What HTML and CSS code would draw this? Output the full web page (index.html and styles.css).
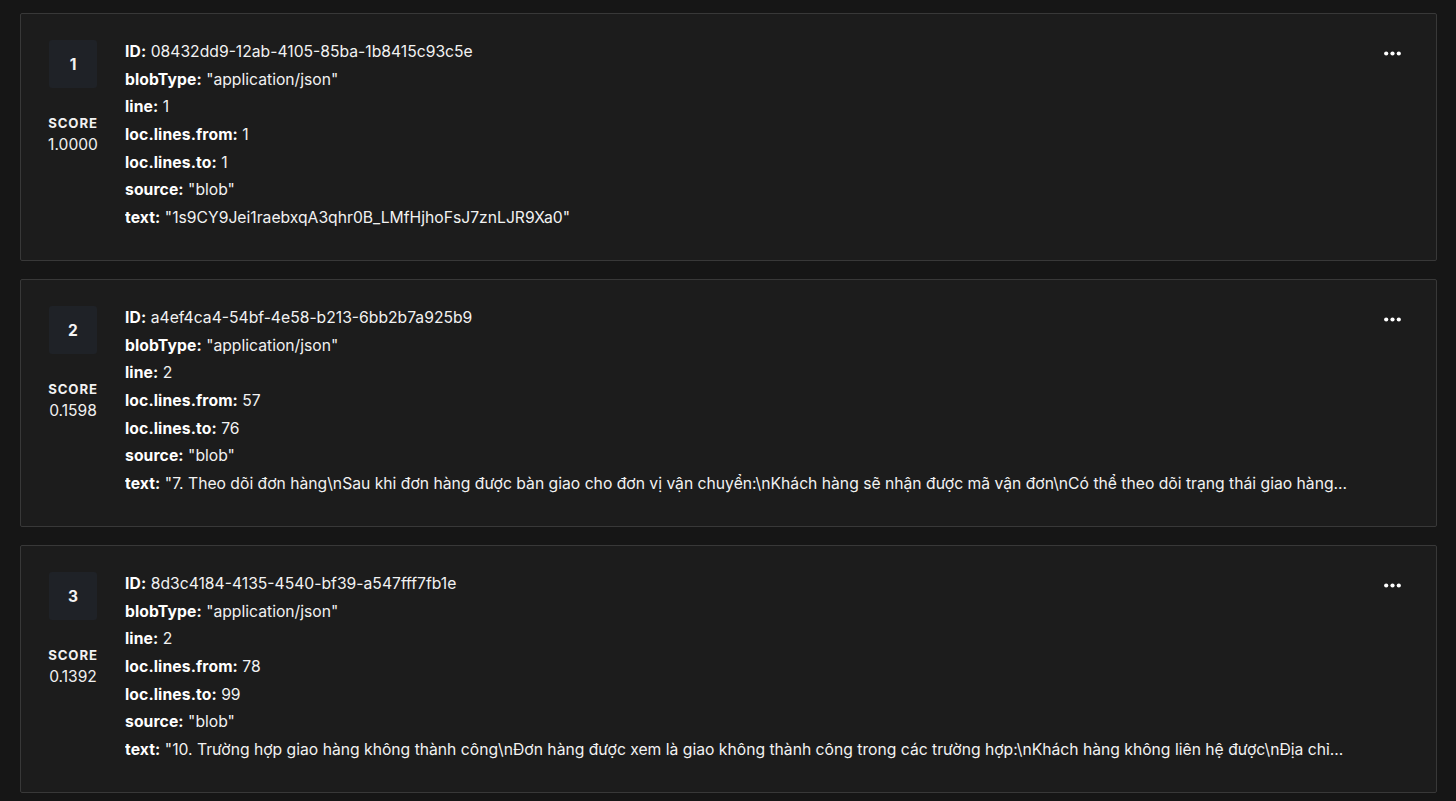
FILE: index.html
```html
<!DOCTYPE html>
<html>
<head>
<meta charset="utf-8">
<link rel="stylesheet" href="styles.css">
</head>
<body>
<div class="list">
  <div class="card">
    <div class="rank">
      <div class="badge">1</div>
      <div class="score-label">SCORE</div>
      <div class="score">1.0000</div>
    </div>
    <div class="fields">
      <div class="row"><b>ID:</b> 08432dd9-12ab-4105-85ba-1b8415c93c5e</div>
      <div class="row"><b>blobType:</b> "application/json"</div>
      <div class="row"><b>line:</b> 1</div>
      <div class="row"><b>loc.lines.from:</b> 1</div>
      <div class="row"><b>loc.lines.to:</b> 1</div>
      <div class="row"><b>source:</b> "blob"</div>
      <div class="row"><b>text:</b> "1s9CY9Jei1raebxqA3qhr0B_LMfHjhoFsJ7znLJR9Xa0"</div>
    </div>
    <button class="more"><svg width="17" height="5" viewBox="0 0 17 5"><circle cx="2.2" cy="2.5" r="2.1" fill="#fff"/><circle cx="8.5" cy="2.5" r="2.1" fill="#fff"/><circle cx="14.8" cy="2.5" r="2.1" fill="#fff"/></svg></button>
  </div>
  <div class="card">
    <div class="rank">
      <div class="badge">2</div>
      <div class="score-label">SCORE</div>
      <div class="score">0.1598</div>
    </div>
    <div class="fields">
      <div class="row"><b>ID:</b> a4ef4ca4-54bf-4e58-b213-6bb2b7a925b9</div>
      <div class="row"><b>blobType:</b> "application/json"</div>
      <div class="row"><b>line:</b> 2</div>
      <div class="row"><b>loc.lines.from:</b> 57</div>
      <div class="row"><b>loc.lines.to:</b> 76</div>
      <div class="row"><b>source:</b> "blob"</div>
      <div class="row"><b>text:</b> "7. Theo dõi đơn hàng\nSau khi đơn hàng được bàn giao cho đơn vị vận chuyển:\nKhách hàng sẽ nhận được mã vận đơn\nCó thể theo dõi trạng thái giao hàng...</div>
    </div>
    <button class="more"><svg width="17" height="5" viewBox="0 0 17 5"><circle cx="2.2" cy="2.5" r="2.1" fill="#fff"/><circle cx="8.5" cy="2.5" r="2.1" fill="#fff"/><circle cx="14.8" cy="2.5" r="2.1" fill="#fff"/></svg></button>
  </div>
  <div class="card">
    <div class="rank">
      <div class="badge">3</div>
      <div class="score-label">SCORE</div>
      <div class="score">0.1392</div>
    </div>
    <div class="fields">
      <div class="row"><b>ID:</b> 8d3c4184-4135-4540-bf39-a547fff7fb1e</div>
      <div class="row"><b>blobType:</b> "application/json"</div>
      <div class="row"><b>line:</b> 2</div>
      <div class="row"><b>loc.lines.from:</b> 78</div>
      <div class="row"><b>loc.lines.to:</b> 99</div>
      <div class="row"><b>source:</b> "blob"</div>
      <div class="row"><b>text:</b> "10. Trường hợp giao hàng không thành công\nĐơn hàng được xem là giao không thành công trong các trường hợp:\nKhách hàng không liên hệ được\nĐịa chỉ...</div>
    </div>
    <button class="more"><svg width="17" height="5" viewBox="0 0 17 5"><circle cx="2.2" cy="2.5" r="2.1" fill="#fff"/><circle cx="8.5" cy="2.5" r="2.1" fill="#fff"/><circle cx="14.8" cy="2.5" r="2.1" fill="#fff"/></svg></button>
  </div>
</div>
</body>
</html>
```

FILE: styles.css
```css
html, body {
  margin: 0;
  padding: 0;
  background: #161616;
}
body {
  font-family: Inter, "Noto Sans", sans-serif;
  color: #f0f0f0;
}
.list {
  display: flex;
  flex-direction: column;
  gap: 18px;
  padding: 13px 19px 0 20px;
}
.card {
  display: flex;
  align-items: flex-start;
  height: 248px;
  box-sizing: border-box;
  background: #1c1c1c;
  border: 1px solid #383838;
  border-radius: 2px;
  padding: 24px 28px 0 28px;
}
.rank {
  width: 48px;
  margin-top: 2px;
  display: flex;
  flex-direction: column;
  align-items: center;
  flex: none;
}
.badge {
  width: 48px;
  height: 48px;
  background: #1f2227;
  border-radius: 3px;
  display: flex;
  align-items: center;
  justify-content: center;
  font-weight: 700;
  font-size: 15.5px;
  color: #f4f4f4;
}
.score-label {
  margin-top: 27px;
  font-size: 13.2px;
  font-weight: 700;
  letter-spacing: 0.9px;
  color: #f2f2f2;
  line-height: 16px;
}
.score {
  margin-top: 5px;
  font-size: 15.6px;
  line-height: 18px;
  color: #f0f0f0;
}
.fields {
  margin-left: 28px;
  width: 1236px;
  min-width: 0;
  flex: none;
}
.row {
  font-size: 15.7px;
  line-height: 27.67px;
  white-space: nowrap;
  overflow: hidden;
  text-overflow: ellipsis;
  color: #f2f2f2;
}
.row b {
  font-weight: 700;
  letter-spacing: 0.1px;
  color: #ffffff;
}
.more {
  margin-left: auto;
  margin-top: -1px;
  width: 32px;
  height: 32px;
  background: transparent;
  border: none;
  padding: 0;
  display: flex;
  align-items: center;
  justify-content: center;
  cursor: pointer;
}
```
